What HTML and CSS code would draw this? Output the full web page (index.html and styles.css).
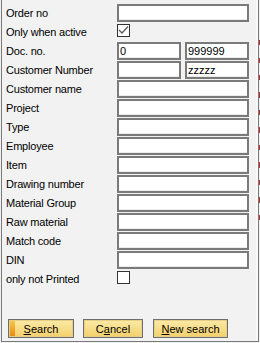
FILE: index.html
```html
<!DOCTYPE html>
<html lang="en">
  <head>
    <meta name="viewport" content="width=device-width, initial-scale=1.0" />
    <title>Search orders</title>
    <link rel="stylesheet" href="styles.css">
  </head>
  <body>
    <div class="panel">
      <form class="fields">
        <label>Order no</label>
        <input type="text" value="">

        <label>Only when active</label>
        <span class="check">
          <svg width="11" height="11" viewBox="0 0 11 11">
            <path d="M1 5 L4 8 L10 1.5" fill="none" stroke="#5a5a5a" stroke-width="1.3" />
          </svg>
        </span>

        <label>Doc. no.</label>
        <div class="pair">
          <input type="text" value="0">
          <input type="text" value="999999">
        </div>

        <label>Customer Number</label>
        <div class="pair">
          <input type="text" value="">
          <input type="text" value="zzzzz">
        </div>

        <label>Customer name</label>
        <input type="text" value="">

        <label>Project</label>
        <input type="text" value="">

        <label>Type</label>
        <input type="text" value="">

        <label>Employee</label>
        <input type="text" value="">

        <label>Item</label>
        <input type="text" value="">

        <label>Drawing number</label>
        <input type="text" value="">

        <label>Material Group</label>
        <input type="text" value="">

        <label>Raw material</label>
        <input type="text" value="">

        <label>Match code</label>
        <input type="text" value="">

        <label>DIN</label>
        <input type="text" value="">

        <label>only not Printed</label>
        <span class="check"></span>
      </form>

      <div class="buttons">
        <button class="btn btn-search"><u>S</u>earch</button>
        <button class="btn btn-cancel">C<u>a</u>ncel</button>
        <button class="btn btn-new"><u>N</u>ew search</button>
      </div>
    </div>
    <div class="edge"></div>
  </body>
</html>
```

FILE: styles.css
```css
html,
body {
  margin: 0;
  padding: 0;
  background: #f0f0f0;
  font-family: "Liberation Sans", Arial, sans-serif;
  font-size: 11px;
  letter-spacing: -0.2px;
  color: #000;
}

body {
  position: relative;
  width: 260px;
  height: 343px;
  overflow: hidden;
}

.panel {
  box-sizing: border-box;
  width: 258px;
  height: 342px;
  margin-left: 1px;
  border: 1px solid #7a7a7a;
  border-top: 0;
  background: #f2f2f2;
  box-shadow: inset -2px 0 #f9f9f9;
  display: flex;
  flex-direction: column;
}

.fields {
  display: grid;
  grid-template-columns: 111px 132px;
  grid-auto-rows: 18px;
  row-gap: 1px;
  padding: 4px 0 0 4px;
  margin: 0;
}

.fields label {
  display: flex;
  align-items: center;
  white-space: nowrap;
}

.fields input {
  box-sizing: border-box;
  width: 100%;
  height: 18px;
  margin: 0;
  padding: 0 1px;
  border: 2px solid #7a7a7a;
  background: #fff;
  box-shadow: inset 0 -1px #ececec;
  font: inherit;
  letter-spacing: 0;
  color: #000;
  outline: none;
}

.pair {
  display: flex;
  gap: 4px;
}

.pair input {
  width: 64px;
}

.check {
  box-sizing: border-box;
  width: 13px;
  height: 13px;
  margin-top: 1px;
  border: 1px solid #333;
  background: #fff;
  display: flex;
  align-items: center;
  justify-content: center;
}

.buttons {
  display: flex;
  margin-top: auto;
  padding: 0 0 3px 6px;
}

.btn {
  box-sizing: border-box;
  height: 19px;
  padding: 0;
  border: 1px solid #6e6e6e;
  box-shadow: inset 0 0 0 1px #e6cf84;
  background: linear-gradient(#fbeaa8, #f4d06a);
  font: inherit;
  letter-spacing: 0;
  color: #000;
  display: flex;
  align-items: center;
  justify-content: center;
}

.btn u {
  text-underline-offset: 1px;
}

.btn-search {
  width: 66px;
  background:
    linear-gradient(#f6c64c, #ea8a12) 1px 1px / 5px 15px no-repeat,
    linear-gradient(#fbeaa8, #f4d06a);
}

.btn-cancel {
  width: 60px;
  margin-left: 9px;
}

.btn-new {
  width: 75px;
  margin-left: 10px;
}

/* bits of the page behind the dialog */
.edge {
  position: absolute;
  left: 259px;
  top: 40px;
  width: 1px;
  height: 180px;
  background: repeating-linear-gradient(#c8262b 0 5px, transparent 5px 17.5px);
}
```
